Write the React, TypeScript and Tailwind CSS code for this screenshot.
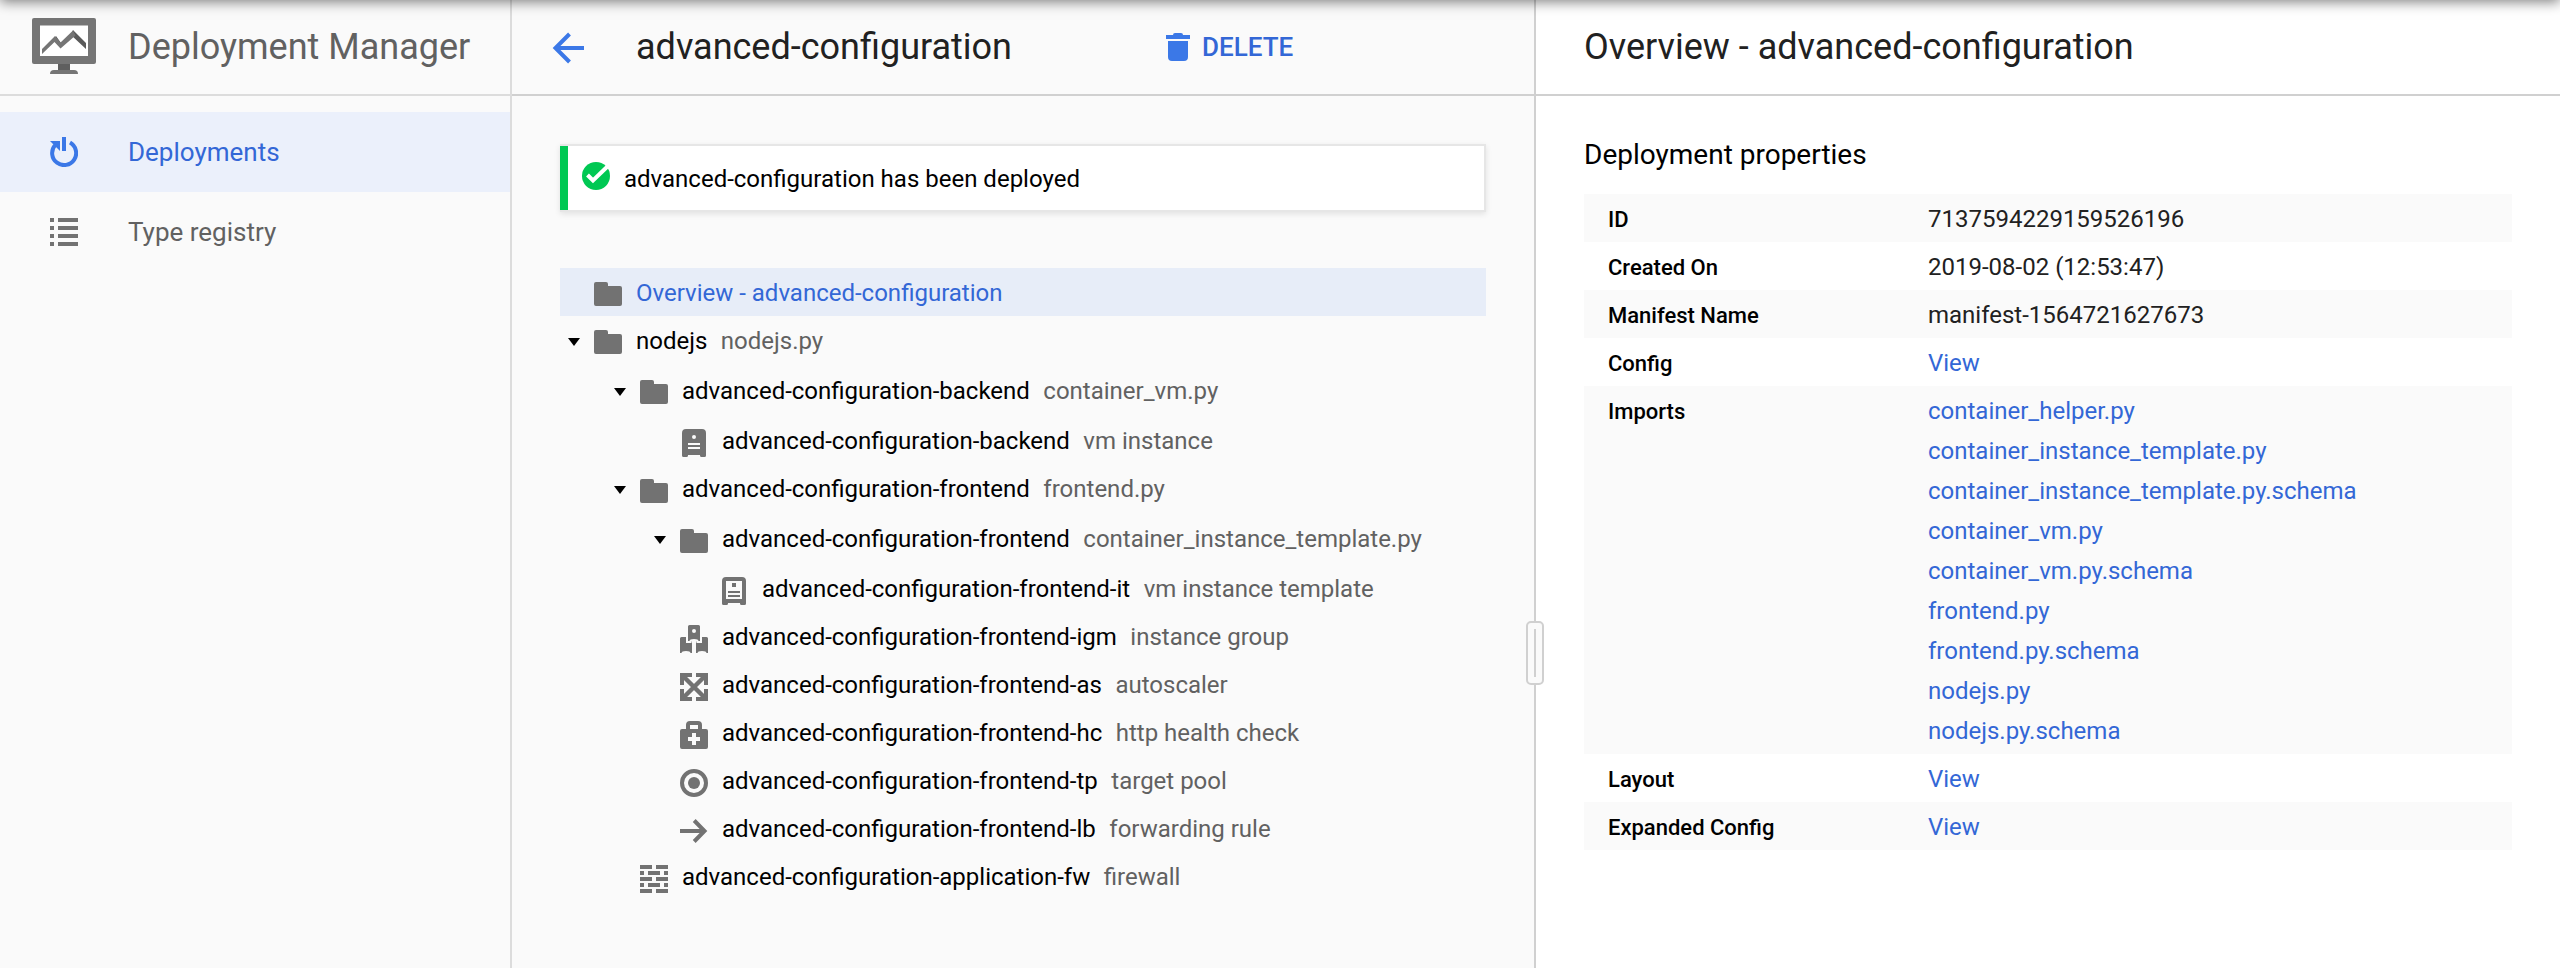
import React from "react";

type IconProps = { className?: string };

const Folder = () => (
  <svg width="28" height="28" viewBox="0 0 28 28" className="block shrink-0">
    <path d="M2 2h10a2 2 0 0 1 2 2v2h12a2 2 0 0 1 2 2v16a2 2 0 0 1-2 2H2a2 2 0 0 1-2-2V4a2 2 0 0 1 2-2z" fill="currentColor" />
  </svg>
);

const Vm = () => (
  <svg width="28" height="28" viewBox="0 0 28 28" className="block shrink-0">
    <path
      fillRule="evenodd"
      fill="currentColor"
      d="M6 0h16a4 4 0 0 1 4 4v22.500a1.500 1.500 0 0 1-1.500 1.500H21.500a1.500 1.500 0 0 1-1.500-1.500V26H8v.5A1.500 1.500 0 0 1 6.500 28H3.500A1.500 1.500 0 0 1 2 26.500V4a4 4 0 0 1 4-4zM14 6a2 2 0 1 0 0 4a2 2 0 0 0 0-4zM8 14v2h12v-2zM8 18v2h12v-2z"
    />
  </svg>
);

const VmTemplate = () => (
  <svg width="28" height="28" viewBox="0 0 28 28" className="block shrink-0">
    <path
      fillRule="evenodd"
      fill="currentColor"
      d="M6 0h16a4 4 0 0 1 4 4v22.500a1.500 1.500 0 0 1-1.500 1.500H21.500a1.500 1.500 0 0 1-1.500-1.500V26H8v.5A1.500 1.500 0 0 1 6.500 28H3.500A1.500 1.500 0 0 1 2 26.500V4a4 4 0 0 1 4-4zM6 4v18h16V4z"
    />
    <path fill="currentColor" d="M12 6h4v4h-4zM8 14h12v2H8zM8 18h12v2H8z" />
  </svg>
);

const Group = () => (
  <svg width="28" height="28" viewBox="0 0 28 28" className="block shrink-0">
    <path fill="currentColor" d="M1.500 12H12V28H10.500a4.500 2 0 0 0-9 0H0V13.500A1.500 1.500 0 0 1 1.500 12z" />
    <path fill="currentColor" d="M26.500 12H16V28h1.500a4.500 2 0 0 1 9 0H28V13.500a1.500 1.500 0 0 0-1.500-1.500z" />
    <path d="M8 10h12v6h-1.500a4.500 2 0 0 0-9 0H8z" fill="#fafafa" stroke="#fafafa" strokeWidth="4" />
    <path
      fillRule="evenodd"
      fill="currentColor"
      d="M9.500 0h9A1.500 1.500 0 0 1 20 1.500V16h-1.500a4.500 2 0 0 0-9 0H8V1.500A1.500 1.500 0 0 1 9.500 0zM14 4a2 2 0 1 0 0 4a2 2 0 0 0 0-4z"
    />
  </svg>
);

const Autoscaler = () => (
  <svg width="28" height="28" viewBox="0 0 28 28" className="block shrink-0">
    <g fill="none" stroke="currentColor" strokeWidth="4">
      <path d="M2 12V2H12M16 2H26V12M26 16V26H16M12 26H2V16" />
      <path d="M3 3L25 25M25 3L3 25" strokeWidth="4.500" />
    </g>
  </svg>
);

const Health = () => (
  <svg width="28" height="28" viewBox="0 0 28 28" className="block shrink-0">
    <path
      fillRule="evenodd"
      fill="currentColor"
      d="M2 8H6V4a4 4 0 0 1 4-4h8a4 4 0 0 1 4 4v4h4a2 2 0 0 1 2 2v16a2 2 0 0 1-2 2H2a2 2 0 0 1-2-2V10a2 2 0 0 1 2-2zM10 4v4h8V4zM12 12v4H8v4h4v4h4v-4h4v-4h-4v-4z"
    />
  </svg>
);

const Target = () => (
  <svg width="28" height="28" viewBox="0 0 28 28" className="block shrink-0">
    <circle cx="14" cy="14" r="12" fill="none" stroke="currentColor" strokeWidth="4" />
    <circle cx="14" cy="14" r="6" fill="currentColor" />
  </svg>
);

const Forward = () => (
  <svg width="28" height="28" viewBox="0 0 28 28" className="block shrink-0">
    <path d="M0 14H24M14.200 3.500L24.500 14L14.200 24.500" fill="none" stroke="currentColor" strokeWidth="4" />
  </svg>
);

const Firewall = () => (
  <svg width="28" height="28" viewBox="0 0 28 28" className="block shrink-0">
    <path
      fill="currentColor"
      d="M0 0h12v4H0zM16 0h12v4H16zM0 6h4v4H0zM8 6h12v4H8zM24 6h4v4h-4zM0 12h12v4H0zM16 12h12v4H16zM0 18h4v4H0zM8 18h12v4H8zM24 18h4v4h-4zM0 24h12v4H0zM16 24h12v4H16z"
    />
  </svg>
);

const Logo = () => (
  <svg width="64" height="58" viewBox="0 0 64 58" className="block shrink-0">
    <path d="M26 46h12v6H26z" fill="#5f5f5f" />
    <path d="M22 52h20a4 4 0 0 1 4 4H18a4 4 0 0 1 4-4z" fill="#757575" />
    <rect width="64" height="46" rx="2" fill="#757575" />
    <path d="M8 7.500h48V38H8z" fill="#fff" />
    <path d="M24 18l5 7v5l-7-8zM41 12l13 13v6L39 17z" fill="#5a5a5a" />
    <path d="M10 31L23 18l5.500 6.500L41 12.500l2.500 5L28.500 30.500l-6-6.500L10 36z" fill="#757575" />
  </svg>
);

const Power = ({ className }: IconProps) => (
  <svg width="28" height="30" viewBox="0 0 28 30" className={className}>
    <path d="M12 0h4v14h-4z" fill="currentColor" />
    <path d="M20 5.600A12 12 0 1 1 5 8.300" fill="none" stroke="currentColor" strokeWidth="4" />
    <path d="M0 4h10v10z" fill="currentColor" />
  </svg>
);

const List = ({ className }: IconProps) => (
  <svg width="28" height="28" viewBox="0 0 28 28" className={className}>
    <path
      fill="currentColor"
      d="M0 0h4v4H0zM8 0h20v4H8zM0 8h4v4H0zM8 8h20v4H8zM0 16h4v4H0zM8 16h20v4H8zM0 24h4v4H0zM8 24h20v4H8z"
    />
  </svg>
);

type Node = {
  name: string;
  kind?: string;
  icon: () => React.ReactElement;
  pad: string;
  caret?: boolean;
  gap?: boolean;
  high?: boolean;
  selected?: boolean;
};

const nodes: Node[] = [
  { name: "Overview - advanced-configuration", icon: Folder, pad: "pl-2", high: true, selected: true },
  { name: "nodejs", kind: "nodejs.py", icon: Folder, pad: "pl-2", caret: true, high: true },
  { name: "advanced-configuration-backend", kind: "container_vm.py", icon: Folder, pad: "pl-[54px]", caret: true, gap: true, high: true },
  { name: "advanced-configuration-backend", kind: "vm instance", icon: Vm, pad: "pl-[94px]", gap: true },
  { name: "advanced-configuration-frontend", kind: "frontend.py", icon: Folder, pad: "pl-[54px]", caret: true },
  { name: "advanced-configuration-frontend", kind: "container_instance_template.py", icon: Folder, pad: "pl-[94px]", caret: true, gap: true },
  { name: "advanced-configuration-frontend-it", kind: "vm instance template", icon: VmTemplate, pad: "pl-[134px]", gap: true },
  { name: "advanced-configuration-frontend-igm", kind: "instance group", icon: Group, pad: "pl-[94px]" },
  { name: "advanced-configuration-frontend-as", kind: "autoscaler", icon: Autoscaler, pad: "pl-[94px]" },
  { name: "advanced-configuration-frontend-hc", kind: "http health check", icon: Health, pad: "pl-[94px]" },
  { name: "advanced-configuration-frontend-tp", kind: "target pool", icon: Target, pad: "pl-[94px]" },
  { name: "advanced-configuration-frontend-lb", kind: "forwarding rule", icon: Forward, pad: "pl-[94px]" },
  { name: "advanced-configuration-application-fw", kind: "firewall", icon: Firewall, pad: "pl-[54px]" },
];

const TreeRow = ({ node }: { node: Node }) => {
  const Icon = node.icon;
  return (
    <div
      className={`flex h-12 items-start ${node.pad} ${node.gap ? "mt-0.5" : ""} ${node.selected ? "bg-[#e7edf8]" : ""}`}
    >
      <div className="w-3 shrink-0 pt-[22px]">
        {node.caret && (
          <svg width="12" height="8" viewBox="0 0 12 8" className="block">
            <path d="M0 0h12L6 8z" fill="#000" />
          </svg>
        )}
      </div>
      <div className={`ml-3.5 text-[#727272] ${node.high ? "pt-3" : "pt-[13px]"}`}>
        <Icon />
      </div>
      <div className="ml-3.5 whitespace-nowrap pt-px text-[24px] leading-[48px]">
        <span className={node.selected ? "text-[#3367d6]" : "text-black"}>{node.name}</span>
        {node.kind && <span className="ml-[13.5px] text-[#616161]">{node.kind}</span>}
      </div>
    </div>
  );
};

const imports = [
  "container_helper.py",
  "container_instance_template.py",
  "container_instance_template.py.schema",
  "container_vm.py",
  "container_vm.py.schema",
  "frontend.py",
  "frontend.py.schema",
  "nodejs.py",
  "nodejs.py.schema",
];

const properties: { label: string; values: string[]; link?: boolean }[] = [
  { label: "ID", values: ["7137594229159526196"] },
  { label: "Created On", values: ["2019-08-02 (12:53:47)"] },
  { label: "Manifest Name", values: ["manifest-1564721627673"] },
  { label: "Config", values: ["View"], link: true },
  { label: "Imports", values: imports, link: true },
  { label: "Layout", values: ["View"], link: true },
  { label: "Expanded Config", values: ["View"], link: true },
];

export default function App() {
  return (
    <div className="relative flex h-[968px] w-[2560px] overflow-hidden bg-white font-['Roboto',sans-serif]">
      <aside className="w-[512px] shrink-0 border-r-2 border-[#dcdcdc] bg-[#fafafa]">
        <div className="flex h-24 items-start border-b-2 border-[#dcdcdc] pl-8 pt-[18px]">
          <Logo />
          <h1 className="ml-8 whitespace-nowrap text-[36px] leading-[58px] text-[#616161]">Deployment Manager</h1>
        </div>
        <nav className="pt-4">
          <a className="flex h-20 items-center bg-[#ebf0fb] pl-[50px] text-[#3367d6]">
            <Power className="block shrink-0 text-[#3b78e7]" />
            <span className="ml-[50px] text-[26px] leading-[40px]">Deployments</span>
          </a>
          <a className="flex h-20 items-center pl-[50px] text-[#616161]">
            <List className="block shrink-0 text-[#727272]" />
            <span className="ml-[50px] text-[26px] leading-[40px]">Type registry</span>
          </a>
        </nav>
      </aside>

      <main className="relative w-[1024px] shrink-0 border-r-2 border-[#d0d0d0] bg-[#fafafa]">
        <header className="flex h-24 items-start border-b-2 border-[#d0d0d0] pl-10">
          <svg width="32" height="32" viewBox="0 0 32 32" className="mt-8 block shrink-0 text-[#3b78e7]">
            <path d="M32 16H4M17.500 2L3.500 16L17.500 30" fill="none" stroke="currentColor" strokeWidth="4" />
          </svg>
          <h2 className="ml-[52px] w-[530px] whitespace-nowrap pt-[18px] text-[36px] leading-[58px] text-[#212121]">
            advanced-configuration
          </h2>
          <button className="flex items-start text-[#3367d6]">
            <svg width="24" height="28" viewBox="0 0 24 28" className="mt-[33px] block shrink-0 text-[#3b78e7]">
              <path d="M9 0h6a2 2 0 0 1 2 2h7v4H0V2h7a2 2 0 0 1 2-2zM2 8h20v16a4 4 0 0 1-4 4H6a4 4 0 0 1-4-4z" fill="currentColor" />
            </svg>
            <span className="ml-3 pt-[27px] text-[26px] font-medium leading-[40px]">DELETE</span>
          </button>
        </header>
        <div className="px-12 pt-12">
          <div className="flex h-[68px] border-y-2 border-r-2 border-[#e6e6e6] bg-white shadow-[0_2px_6px_rgba(0,0,0,0.1)]">
            <div className="w-2 shrink-0 bg-[#00c853]" />
            <svg width="28" height="28" viewBox="0 0 28 28" className="ml-3.5 mt-4 block shrink-0">
              <circle cx="14" cy="14" r="14" fill="#00c853" />
              <path d="M5.500 13L11 18.500L26.500 3.500" fill="none" stroke="#fff" strokeWidth="4" />
            </svg>
            <span className="ml-3.5 text-[24px] leading-[66px] text-black">advanced-configuration has been deployed</span>
          </div>
          <div className="pt-14">
            {nodes.map((n) => (
              <TreeRow key={`${n.name} ${n.kind}`} node={n} />
            ))}
          </div>
        </div>
        <div className="absolute -right-[10px] top-[621px] flex h-16 w-[18px] items-center justify-center rounded-[5px] border-2 border-[#d0d0d0] bg-[#fafafa]">
          <div className="h-12 w-0.5 bg-[#d0d0d0]" />
        </div>
      </main>

      <section className="min-w-0 flex-1">
        <header className="h-24 border-b-2 border-[#d0d0d0] pl-12 pt-[18px]">
          <h2 className="whitespace-nowrap text-[36px] leading-[58px] text-[#212121]">Overview - advanced-configuration</h2>
        </header>
        <div className="px-12 pt-[35px]">
          <h3 className="h-[63px] text-[28px] leading-[48px] text-black">Deployment properties</h3>
          {properties.map((p, i) => (
            <div
              key={p.label}
              className={`flex pb-[3px] pl-6 pt-[5px] text-[24px] leading-[40px] ${i % 2 === 0 ? "bg-[#fafafa]" : ""}`}
            >
              <div className="h-10 w-80 shrink-0 pt-px text-[22px] font-medium leading-[39px] text-black">{p.label}</div>
              <div className={p.link ? "text-[#3367d6]" : "text-[#212121]"}>
                {p.values.map((v) => (
                  <div key={v}>{v}</div>
                ))}
              </div>
            </div>
          ))}
        </div>
      </section>

      <div className="pointer-events-none absolute -top-10 left-0 h-10 w-full shadow-[0_2px_12px_rgba(0,0,0,0.5)]" />
    </div>
  );
}
